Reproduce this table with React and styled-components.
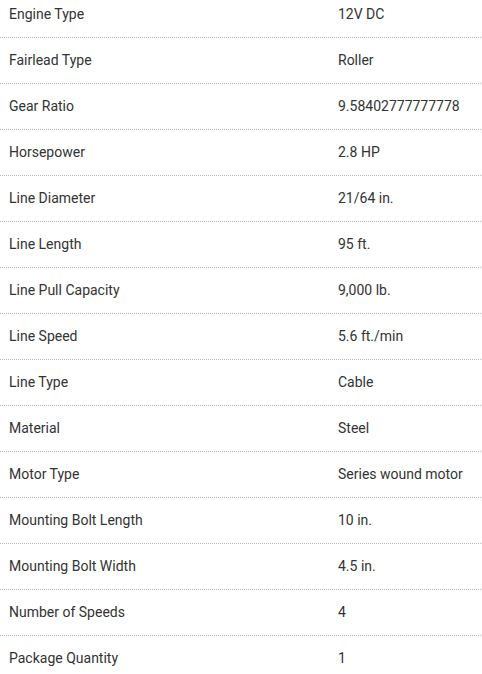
import React from "react";
import styled, { createGlobalStyle } from "styled-components";

const GlobalStyle = createGlobalStyle`
  html, body { margin: 0; padding: 0; background: #fff; }
  body { font-family: Roboto, "Noto Sans", Arial, sans-serif; overflow: hidden; }
`;

const Table = styled.div`
  display: flex;
  flex-direction: column;
  width: 482px;
  margin-top: -8px;
`;

const Row = styled.div`
  display: grid;
  grid-template-columns: 329px 1fr;
  border-bottom: 1px dotted #b5b5b5;
  width: 481px;
`;

const Cell = styled.div`
  padding: 12px 9px 13px;
  font-size: 14px;
  line-height: 20px;
  color: #333;
  white-space: nowrap;
`;

const specs = [
  ["Engine Type", "12V DC"],
  ["Fairlead Type", "Roller"],
  ["Gear Ratio", "9.58402777777778"],
  ["Horsepower", "2.8 HP"],
  ["Line Diameter", "21/64 in."],
  ["Line Length", "95 ft."],
  ["Line Pull Capacity", "9,000 lb."],
  ["Line Speed", "5.6 ft./min"],
  ["Line Type", "Cable"],
  ["Material", "Steel"],
  ["Motor Type", "Series wound motor"],
  ["Mounting Bolt Length", "10 in."],
  ["Mounting Bolt Width", "4.5 in."],
  ["Number of Speeds", "4"],
  ["Package Quantity", "1"],
];

export default function App() {
  return (
    <>
      <GlobalStyle />
      <Table>
        {specs.map(([k, v]) => (
          <Row key={k}>
            <Cell>{k}</Cell>
            <Cell>{v}</Cell>
          </Row>
        ))}
      </Table>
    </>
  );
}
